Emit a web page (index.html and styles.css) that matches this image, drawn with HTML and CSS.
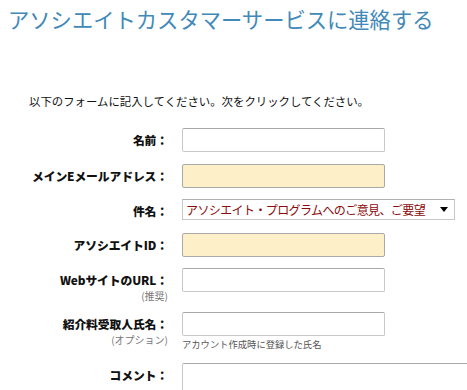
FILE: index.html
```html
<!DOCTYPE html>
<html lang="ja">
<head>
<meta charset="utf-8">
<link rel="stylesheet" href="styles.css">
</head>
<body>
<div class="page">
  <h1 class="title">アソシエイトカスタマーサービスに連絡する</h1>
  <p class="intro">以下のフォームに記入してください。次をクリックしてください。</p>
  <div class="form">
    <div class="row r-name">
      <div class="label"><span class="lt">名前：</span></div>
      <div class="field"><div class="input"></div></div>
    </div>
    <div class="row r-email">
      <div class="label"><span class="lt">メインEメールアドレス：</span></div>
      <div class="field"><div class="input filled"></div></div>
    </div>
    <div class="row r-subject">
      <div class="label"><span class="lt">件名：</span></div>
      <div class="field"><div class="select"><span class="sel-text">アソシエイト・プログラムへのご意見、ご要望</span><span class="arrow"></span></div></div>
    </div>
    <div class="row r-id">
      <div class="label"><span class="lt">アソシエイトID：</span></div>
      <div class="field"><div class="input filled"></div></div>
    </div>
    <div class="row r-web">
      <div class="label"><span class="lt">WebサイトのURL：</span><span class="sub">(推奨)</span></div>
      <div class="field"><div class="input"></div></div>
    </div>
    <div class="row r-ref">
      <div class="label"><span class="lt">紹介料受取人氏名：</span><span class="sub">(オプション)</span></div>
      <div class="field"><div class="input"></div><div class="help">アカウント作成時に登録した氏名</div></div>
    </div>
    <div class="row r-comment">
      <div class="label"><span class="lt">コメント：</span></div>
      <div class="field"><div class="textarea"></div></div>
    </div>
  </div>
</div>
</body>
</html>
```
FILE: styles.css
```css
html, body {
  margin: 0;
  padding: 0;
  background: #ffffff;
  overflow: hidden;
}
body {
  font-family: "Noto Sans CJK JP", "Noto Sans", sans-serif;
  color: #000;
}
.page {
  width: 467px;
  height: 390px;
  overflow: hidden;
}
.title {
  margin: 0;
  padding: 4px 0 0 8px;
  font-size: 21.3px;
  font-weight: normal;
  line-height: 30px;
  color: #4189b8;
  white-space: nowrap;
}
.intro {
  margin: 59px 0 0 29px;
  font-size: 11.4px;
  line-height: 16px;
  color: #111;
  white-space: nowrap;
}
.form {
  margin-top: 19px;
}
.row {
  display: flex;
  align-items: flex-start;
}
.label {
  width: 168px;
  flex: none;
  display: flex;
  flex-direction: column;
  align-items: flex-end;
  margin-right: 14px;
}
.lt {
  font-weight: 900;
  font-size: 11.8px;
  line-height: 24px;
  white-space: nowrap;
  letter-spacing: -0.1px;
  color: #111;
}
.sub {
  font-size: 10px;
  line-height: 12px;
  color: #777;
  margin-top: -2px;
  white-space: nowrap;
}
.field {
  display: flex;
  flex-direction: column;
}
.input {
  width: 201px;
  height: 22px;
  border: 1px solid #c8c8c8;
  border-top-color: #a8a8a8;
  border-radius: 2px;
  background: #fff;
}
.input.filled {
  background: #fdf0c9;
  border-color: #a9a9a9;
}
.select {
  height: 21px;
  border: 1px solid #c8c8c8;
  border-top-color: #b0b0b0;
  background: #fff;
  display: flex;
  align-items: center;
  justify-content: space-between;
  padding: 0 6px 0 3px;
  box-sizing: border-box;
  width: 273px;
}
.sel-text {
  color: #8a0a0a;
  font-size: 12px;
  line-height: 20px;
  white-space: nowrap;
  letter-spacing: -0.6px;
}
.arrow {
  width: 0;
  height: 0;
  border-left: 4px solid transparent;
  border-right: 4px solid transparent;
  border-top: 5px solid #000;
}
.help {
  font-size: 9.3px;
  line-height: 12px;
  color: #555;
  margin-top: 2px;
  white-space: nowrap;
}
.textarea {
  width: 300px;
  height: 60px;
  border: 1px solid #c8c8c8;
  border-top-color: #a8a8a8;
  border-radius: 2px;
}
.r-name { margin-bottom: 12px; }
.r-email { margin-bottom: 11px; }
.r-subject { margin-bottom: 10px; }
.r-id { margin-bottom: 11px; }
.r-web { margin-bottom: 10px; }
.r-ref { margin-bottom: 13px; }
```
